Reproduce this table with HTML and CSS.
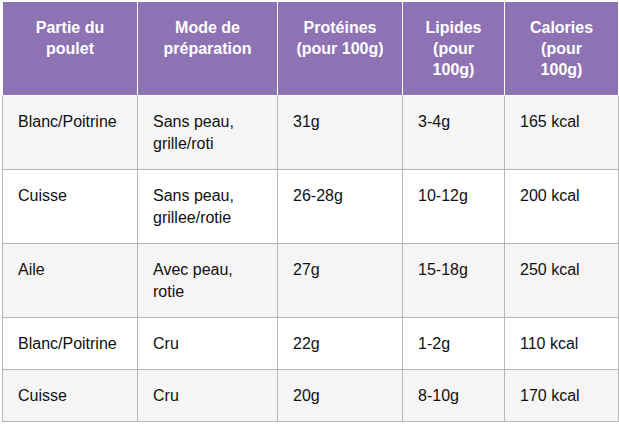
FILE: index.html
```html
<!DOCTYPE html>
<html lang="fr">
<head>
<meta charset="utf-8">
<title>Poulet</title>
<link rel="stylesheet" href="styles.css">
</head>
<body>
<table class="nutri">
  <colgroup>
    <col class="c1"><col class="c2"><col class="c3"><col class="c4"><col class="c5">
  </colgroup>
  <thead>
    <tr>
      <th>Partie du<br>poulet</th>
      <th>Mode de<br>préparation</th>
      <th>Protéines<br>(pour 100g)</th>
      <th>Lipides<br>(pour<br>100g)</th>
      <th>Calories<br>(pour<br>100g)</th>
    </tr>
  </thead>
  <tbody>
    <tr class="alt">
      <td>Blanc/Poitrine</td>
      <td>Sans peau,<br>grille/roti</td>
      <td>31g</td>
      <td>3-4g</td>
      <td>165 kcal</td>
    </tr>
    <tr>
      <td>Cuisse</td>
      <td>Sans peau,<br>grillee/rotie</td>
      <td>26-28g</td>
      <td>10-12g</td>
      <td>200 kcal</td>
    </tr>
    <tr class="alt">
      <td>Aile</td>
      <td>Avec peau,<br>rotie</td>
      <td>27g</td>
      <td>15-18g</td>
      <td>250 kcal</td>
    </tr>
    <tr>
      <td>Blanc/Poitrine</td>
      <td>Cru</td>
      <td>22g</td>
      <td>1-2g</td>
      <td>110 kcal</td>
    </tr>
    <tr class="alt">
      <td>Cuisse</td>
      <td>Cru</td>
      <td>20g</td>
      <td>8-10g</td>
      <td>170 kcal</td>
    </tr>
  </tbody>
</table>
</body>
</html>
```
FILE: styles.css
```css
html, body {
  margin: 0;
  padding: 0;
  background: #ffffff;
}
body {
  padding: 1px 0 0 2px;
  font-family: "Liberation Sans", Arial, sans-serif;
  color: #111111;
}
.nutri {
  border-collapse: collapse;
  table-layout: fixed;
  width: 616px;
}
.c1 { width: 135px; }
.c2 { width: 140px; }
.c3 { width: 125px; }
.c4 { width: 102px; }
.c5 { width: 114px; }
.nutri th {
  background: #8e73b4;
  color: #ffffff;
  font-weight: bold;
  font-size: 16px;
  line-height: 21px;
  text-align: center;
  vertical-align: top;
  padding: 15px 6px 15px 6px;
  border: 1px solid #ffffff;
}
.nutri td {
  font-size: 16px;
  line-height: 22px;
  text-align: left;
  vertical-align: top;
  padding: 15px 10px 14px 15px;
  border: 1px solid #b5b5b5;
  background: #ffffff;
}
.nutri tr.alt td {
  background: #f5f5f5;
}
```
